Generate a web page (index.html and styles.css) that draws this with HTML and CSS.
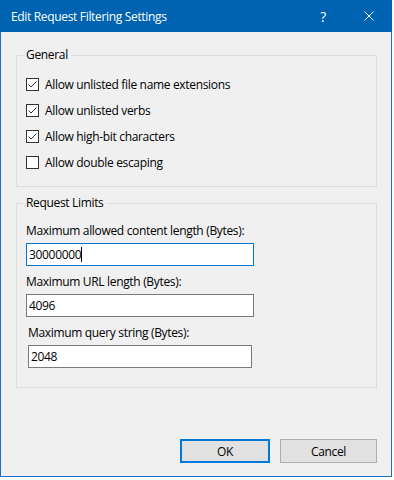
FILE: index.html
```html
<!DOCTYPE html>
<html lang="en">
<head>
  <meta charset="UTF-8" />
  <meta name="viewport" content="width=device-width, initial-scale=1" />
  <title>Edit Request Filtering Settings</title>
  <link rel="stylesheet" href="styles.css">
</head>
<body>

  <div class="dialog">
    <div class="titlebar">
      <span class="title">Edit Request Filtering Settings</span>
      <div class="caption-buttons">
        <span class="caption-btn">?</span>
        <span class="caption-btn">
          <svg width="10" height="10" viewBox="0 0 10 10">
            <path d="M0.5 0.5 L9.5 9.5 M9.5 0.5 L0.5 9.5" stroke="#fff" stroke-width="1" fill="none" />
          </svg>
        </span>
      </div>
    </div>

    <div class="dialog-body">
      <fieldset class="group">
        <legend>General</legend>
        <div class="check-row">
          <span class="checkbox checked"></span>
          <span>Allow unlisted file name extensions</span>
        </div>
        <div class="check-row">
          <span class="checkbox checked"></span>
          <span>Allow unlisted verbs</span>
        </div>
        <div class="check-row">
          <span class="checkbox checked"></span>
          <span>Allow high-bit characters</span>
        </div>
        <div class="check-row">
          <span class="checkbox"></span>
          <span>Allow double escaping</span>
        </div>
      </fieldset>

      <fieldset class="group limits">
        <legend>Request Limits</legend>
        <div class="field">
          <div class="field-label">Maximum allowed content length (Bytes):</div>
          <div class="textbox focused">30000000<span class="caret"></span></div>
        </div>
        <div class="field">
          <div class="field-label">Maximum URL length (Bytes):</div>
          <div class="textbox">4096</div>
        </div>
        <div class="field field-shifted">
          <div class="field-label">Maximum query string (Bytes):</div>
          <div class="textbox">2048</div>
        </div>
      </fieldset>

      <div class="buttons">
        <button class="btn btn-default">OK</button>
        <button class="btn btn-cancel">Cancel</button>
      </div>
    </div>
  </div>

</body>
</html>
```

FILE: styles.css
```css
body {
  margin: 0;
  background-color: #ffffff;
  font-family: 'Open Sans', 'Liberation Sans', sans-serif;
  font-size: 12px;
  letter-spacing: -0.33px;
  color: #000;
}

.dialog {
  width: 392px;
  height: 477px;
  display: flex;
  flex-direction: column;
}

/* Title bar */
.titlebar {
  height: 32px;
  flex-shrink: 0;
  background-color: #0063b1;
  color: white;
  display: flex;
  align-items: center;
  justify-content: space-between;
  padding-left: 11px;
}

.caption-buttons {
  display: flex;
  height: 100%;
}

.caption-btn {
  width: 46px;
  height: 100%;
  display: flex;
  justify-content: center;
  align-items: center;
  font-size: 14px;
}

.dialog-body {
  flex-grow: 1;
  background-color: #f0f0f0;
  border: 1px solid #1a6fbf;
  border-top: none;
  padding: 15px 14px 13px 15px;
  display: flex;
  flex-direction: column;
}

/* Group boxes */
.group {
  margin: 0;
  border: 1px solid #dcdcdc;
  padding: 8px 10px 11px 9px;
}

.group legend {
  margin-left: -3px;
  padding: 0 3px;
  line-height: 16px;
}

.limits {
  margin-top: 8px;
  padding-top: 12px;
  padding-bottom: 19px;
}

.check-row {
  height: 26px;
  display: flex;
  align-items: center;
  gap: 6px;
}

.checkbox {
  width: 13px;
  height: 13px;
  box-sizing: border-box;
  border: 1px solid #333;
  background-color: #fff;
  flex-shrink: 0;
}

.checkbox.checked {
  background: #fff url("data:image/svg+xml;utf8,<svg xmlns='http://www.w3.org/2000/svg' width='11' height='11' viewBox='0 0 11 11'><path d='M1.5 5.5 L4 8 L9.5 2.5' stroke='%23333' stroke-width='1' fill='none'/></svg>") no-repeat center;
}

/* Text fields */
.field {
  margin-bottom: 8px;
}

.field:last-child {
  margin-bottom: 0;
}

.field-label {
  line-height: 16px;
  margin-bottom: 4px;
}

.textbox {
  width: 228px;
  height: 23px;
  box-sizing: border-box;
  border: 1px solid #7a7a7a;
  background-color: #fff;
  padding: 0 2px;
  line-height: 21px;
  display: flex;
  align-items: center;
}

.textbox.focused {
  border-color: #0078d7;
}

.caret {
  width: 1px;
  height: 15px;
  background-color: #000;
}

.field-shifted {
  margin-left: 2px;
}

.field-shifted .textbox {
  width: 224px;
}

/* Buttons */
.buttons {
  margin-top: auto;
  display: flex;
  justify-content: flex-end;
  gap: 10px;
}

.btn {
  height: 24px;
  box-sizing: border-box;
  background-color: #e1e1e1;
  border: 1px solid #adadad;
  font-family: inherit;
  font-size: 12px;
  letter-spacing: inherit;
  color: #000;
  padding: 0;
}

.btn-default {
  width: 90px;
  border: 2px solid #0078d7;
}

.btn-cancel {
  width: 97px;
}
```
